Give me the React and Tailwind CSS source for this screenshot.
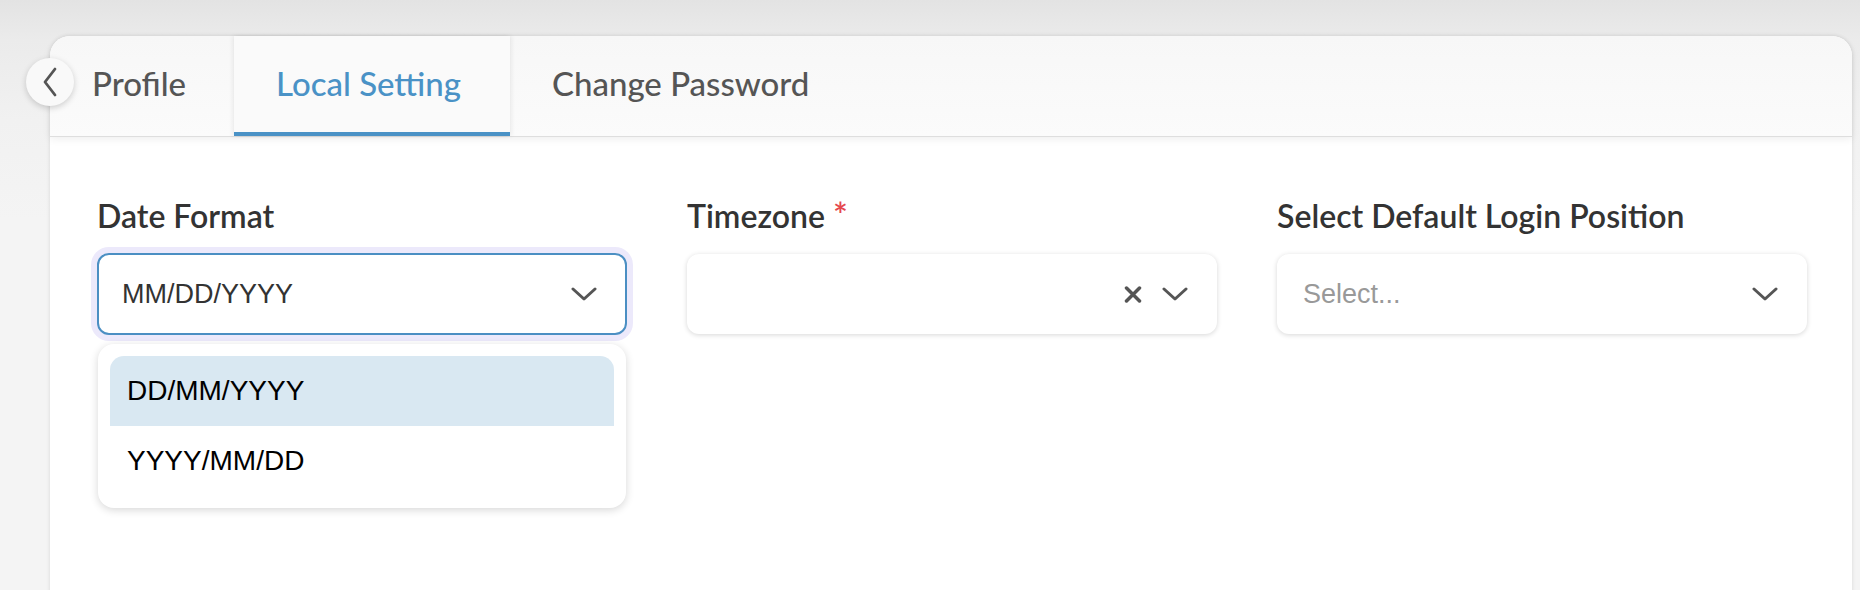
import React from "react";

const ChevronDown = () => (
  <svg width="26" height="14" viewBox="0 0 26 14" fill="none">
    <path d="M2 2l11 10 11-10" stroke="#555" strokeWidth="3" strokeLinecap="round" strokeLinejoin="round" />
  </svg>
);

const Cross = () => (
  <svg width="18" height="17" viewBox="0 0 18 17" fill="none">
    <path d="M2.5 2l13 13M15.5 2l-13 13" stroke="#555" strokeWidth="3.5" strokeLinecap="round" />
  </svg>
);

const tabs = [
  { name: "Profile", w: "w-[184px]", active: false },
  { name: "Local Setting", w: "w-[276px]", active: true },
  { name: "Change Password", w: "w-[340px]", active: false },
];

const dateOptions = ["DD/MM/YYYY", "YYYY/MM/DD"];

export default function App() {
  return (
    <div className="h-[590px] w-[1860px] overflow-hidden bg-[linear-gradient(180deg,#e3e3e3_0px,#ebebeb_40px,#f1f1f1_120px,#f4f4f4_220px)] pl-[50px] pr-[8px] pt-[36px] font-['Lato',sans-serif]">
      <div className="relative h-[600px] rounded-t-[20px] bg-white shadow-[0_0_4px_rgba(0,0,0,0.12)]">
        {/* back button */}
        <button className="absolute left-[-24px] top-[22px] z-20 flex h-[48px] w-[48px] items-center justify-center rounded-full bg-[#f9f9f9] shadow-[0_2px_6px_rgba(0,0,0,0.18)]">
          <svg width="16" height="30" viewBox="0 0 16 30" fill="none">
            <path d="M13 2L3 15l10 13" stroke="#555" strokeWidth="2.8" strokeLinecap="round" strokeLinejoin="round" />
          </svg>
        </button>

        {/* tab header */}
        <div className="relative z-10 flex h-[100px] rounded-t-[20px] bg-[linear-gradient(180deg,#f7f7f7,#fbfbfb)] shadow-[0_1px_0_#dedede,0_3px_8px_rgba(0,0,0,0.07)]">
          {tabs.map((tab) => (
            <div
              key={tab.name}
              className={`flex h-full items-center border-b-4 pl-[42px] text-[33px] font-medium ${tab.w} ${
                tab.active
                  ? "border-[#4a92c6] bg-[#fafafa] text-[#4a92c6] shadow-[2px_0_4px_rgba(0,0,0,0.06),-2px_0_4px_rgba(0,0,0,0.06)]"
                  : "border-transparent text-[#555]"
              }`}
            >
              {tab.name}
            </div>
          ))}
        </div>

        {/* form */}
        <div className="grid grid-cols-3 gap-x-[60px] pl-[47px] pr-[45px] pt-[60px]">
          {/* date format */}
          <div className="flex flex-col">
            <label className="h-[40px] text-[32px] font-semibold leading-[40px] text-[#333]">Date Format</label>
            <div className="relative mt-[17px]">
              <div className="flex h-[82px] items-center justify-between rounded-[12px] border-2 border-[#4b8fc3] bg-white pl-[23px] pr-[28px] shadow-[0_0_0_6px_#ece9fb] font-['Liberation_Sans',sans-serif] text-[27px] text-[#333]">
                <span>MM/DD/YYYY</span>
                <ChevronDown />
              </div>
              <div className="absolute left-[1px] right-[1px] top-[91px] z-20 rounded-[16px] bg-white px-[12px] py-[12px] shadow-[0_2px_8px_rgba(0,0,0,0.16)] font-['Liberation_Sans',sans-serif] text-[28px] text-black">
                {dateOptions.map((opt, i) => (
                  <div
                    key={opt}
                    className={`flex h-[70px] items-center pl-[17px] ${i === 0 ? "rounded-t-[14px] bg-[#d9e8f2]" : ""}`}
                  >
                    {opt}
                  </div>
                ))}
              </div>
            </div>
          </div>

          {/* timezone */}
          <div className="flex flex-col">
            <label className="h-[40px] text-[32px] font-semibold leading-[40px] text-[#333]">
              Timezone <span className="text-[35px] leading-none text-[#e5484d]">*</span>
            </label>
            <div className="mt-[18px] flex h-[80px] items-center justify-end gap-[20px] rounded-[12px] bg-white pr-[29px] shadow-[0_1px_5px_rgba(0,0,0,0.16)]">
              <Cross />
              <ChevronDown />
            </div>
          </div>

          {/* default login position */}
          <div className="flex flex-col">
            <label className="h-[40px] text-[32px] font-semibold leading-[40px] text-[#333]">Select Default Login Position</label>
            <div className="mt-[18px] flex h-[80px] items-center justify-between rounded-[12px] bg-white pl-[26px] pr-[29px] shadow-[0_1px_5px_rgba(0,0,0,0.16)] font-['Liberation_Sans',sans-serif] text-[27px] text-[#999]">
              <span>Select...</span>
              <ChevronDown />
            </div>
          </div>
        </div>
      </div>
    </div>
  );
}
